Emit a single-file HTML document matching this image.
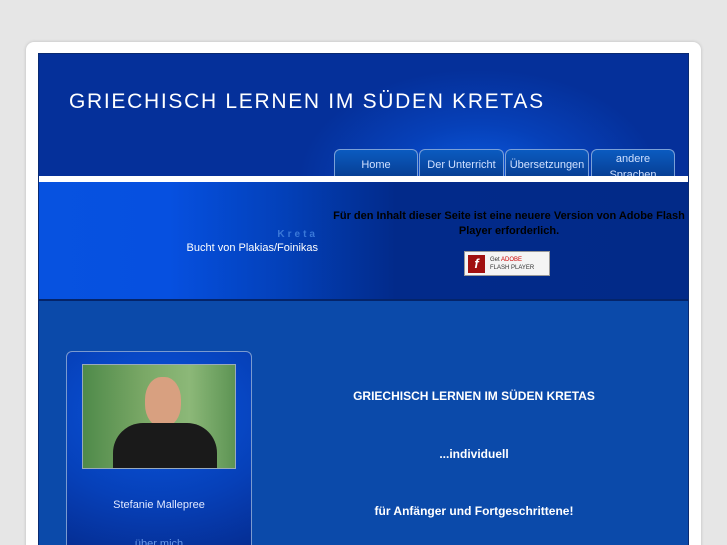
<!DOCTYPE html>
<html><head><meta charset="utf-8"><style>
*{margin:0;padding:0;box-sizing:border-box}
html,body{width:727px;height:545px;overflow:hidden}
body{background:#e6e6e6;font-family:"Liberation Sans",sans-serif;position:relative}
.wrap{position:absolute;left:26px;top:42px;width:675px;height:520px;background:#fff;border-radius:8px;box-shadow:0 0 3px #bbb}
.box{position:absolute;left:38px;top:53px;width:651px;height:500px;background:#0b4aaa;border:1px solid #0a2a70}
.hdr{position:absolute;left:0;top:0;width:649px;height:122px;background:radial-gradient(ellipse 180px 110px at 440px 125px,#0b5ae0 0%,#0640b8 50%,#05309a 100%)}
.hdr h1{position:absolute;left:30px;top:36px;font-weight:normal;color:#fff;font-size:21px;letter-spacing:1.7px}
.tab{position:absolute;top:95px;height:27px;border:1px solid #7aa0d8;border-bottom:none;border-radius:6px 6px 0 0;background:linear-gradient(#0b5bc0,#073f95);color:#cfe0ff;font-size:11px;text-align:center;line-height:30px;overflow:hidden}
.strip{position:absolute;left:0;top:122px;width:649px;height:6px;background:#fff}
.ban{position:absolute;left:0;top:128px;width:649px;height:119px;background:linear-gradient(90deg,#0752e0 0%,#0650e0 20%,#0340b8 38%,#022a8a 55%,#022a88 100%);border-bottom:2px solid #04246a}
.main{position:absolute;left:0;top:247px;width:649px;height:260px;background:#0b4aaa}
.card{position:absolute;left:27px;top:50px;width:186px;height:210px;border:1px solid #7a9ad0;border-radius:6px;background:radial-gradient(ellipse 200px 150px at 90px 60px,#0a56e0,#0640b8 60%,#052e94)}
.photo{position:absolute;left:15px;top:12px;width:154px;height:105px;border:1px solid #9ab;background:linear-gradient(90deg,#4f8a4a,#7aa866 40%,#8cb878 70%,#5d9454);overflow:hidden}
.c{position:absolute;text-align:center;color:#fff;font-weight:bold;font-size:12px}
</style></head><body>
<div class="wrap"></div>
<div class="box">
<div class="hdr"><h1>GRIECHISCH LERNEN IM SÜDEN KRETAS</h1>
<div class="tab" style="left:295px;width:84px">Home</div>
<div class="tab" style="left:380px;width:85px">Der Unterricht</div>
<div class="tab" style="left:466px;width:84px">Übersetzungen</div>
<div class="tab" style="left:552px;width:84px;line-height:16px;padding-top:1px">andere<br>Sprachen</div>
</div>
<div class="strip"></div>
<div class="ban">
<div style="position:absolute;left:0;width:279px;top:47px;text-align:right;color:#3a78d8;font-size:10px;letter-spacing:3px;font-weight:bold">Kreta</div>
<div style="position:absolute;left:0;width:279px;top:60px;text-align:right;color:#fff;font-size:11px">Bucht von Plakias/Foinikas</div>
<div style="position:absolute;left:290px;width:360px;top:27px;text-align:center;color:#000;font-size:11px;font-weight:bold;line-height:15px">Für den Inhalt dieser Seite ist eine neuere Version von Adobe Flash Player erforderlich.</div>
<div style="position:absolute;left:425px;top:69px;width:86px;height:25px;background:#f4f4f4;border:1px solid #999">
<div style="position:absolute;left:3px;top:3px;width:17px;height:18px;background:#a01010;color:#fff;font-size:13px;font-style:italic;font-weight:bold;text-align:center;line-height:18px">f</div>
<div style="position:absolute;left:25px;top:4px;font-size:6px;color:#333;line-height:8px">Get <span style="color:#c00">ADOBE</span><br>FLASH PLAYER</div></div>
</div>
<div class="main">
<div class="card"><div class="photo">
<div style="position:absolute;left:62px;top:12px;width:36px;height:50px;border-radius:45%;background:#d8a080"></div>
<div style="position:absolute;left:30px;top:58px;width:104px;height:50px;border-radius:30px 30px 0 0;background:#1a1a1a"></div></div>
<div style="position:absolute;left:0;width:184px;top:147px;text-align:center;color:#e0e8ff;font-size:11px">Stefanie Mallepree</div>
<div style="position:absolute;left:0;width:184px;top:186px;text-align:center;color:#6a9ae8;font-size:11px">über mich</div>
</div>
<div class="c" style="left:235px;width:400px;top:88px">GRIECHISCH LERNEN IM SÜDEN KRETAS</div>
<div class="c" style="left:235px;width:400px;top:146px">...individuell</div>
<div class="c" style="left:235px;width:400px;top:203px">für Anfänger und Fortgeschrittene!</div>
</div>
</div>
</body></html>
